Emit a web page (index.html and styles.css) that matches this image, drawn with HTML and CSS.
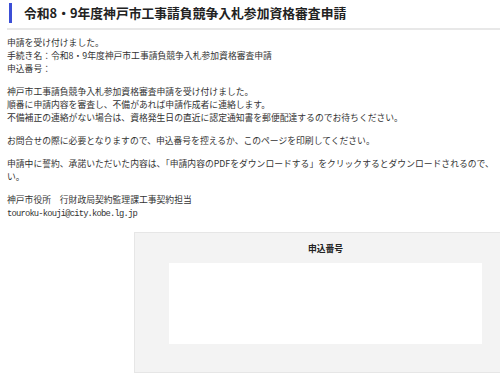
FILE: index.html
```html
<!DOCTYPE html>
<html>
<head>
    <title>申請完了</title>
    <link rel="stylesheet" href="styles.css">
</head>
<body>

    <!-- Page title -->
    <div class="title-bar">
        <h1 class="title">令和8・9年度神戸市工事請負競争入札参加資格審査申請</h1>
    </div>

    <div class="content">
        <p>申請を受け付けました。<br>
        手続き名：令和8・9年度神戸市工事請負競争入札参加資格審査申請<br>
        申込番号：</p>

        <p>神戸市工事請負競争入札参加資格審査申請を受け付けました。<br>
        順番に申請内容を審査し、不備があれば申請作成者に連絡します。<br>
        不備補正の連絡がない場合は、資格発生日の直近に認定通知書を郵便配達するのでお待ちください。</p>

        <p>お問合せの際に必要となりますので、申込番号を控えるか、このページを印刷してください。</p>

        <p>申請中に誓約、承諾いただいた内容は、「申請内容のPDFをダウンロードする」をクリックするとダウンロードされるので、い。</p>

        <p>神戸市役所　行財政局契約監理課工事契約担当<br>
        <span class="mail">touroku-kouji@city.kobe.lg.jp</span></p>

        <!-- Application number box -->
        <div class="number-box">
            <div class="number-label">申込番号</div>
            <div class="number-value"></div>
        </div>
    </div>

</body>
</html>
```

FILE: styles.css
```css
html {
    overflow: hidden;
}
body {
    margin: 0;
    font-family: "Noto Sans CJK JP", "Noto Sans", sans-serif;
    font-size: 8.8px;
    line-height: 13px;
    color: #333;
    background-color: #fff;
}
.title-bar {
    margin-left: 7px;
    padding: 3px 0 5px 2px;
    border-bottom: 2px solid #e8e8e8;
}
.title {
    margin: 0;
    border-left: 3px solid #3c4fd6;
    padding-left: 12px;
    height: 20px;
    font-size: 12.8px;
    line-height: 20px;
    font-weight: bold;
    color: #222;
}
.content {
    padding: 6px 0 0 7px;
}
.content p {
    margin: 0 0 10px 0;
}
.mail {
    font-family: "Liberation Mono", monospace;
    letter-spacing: -0.8px;
}
.number-box {
    margin: 11px 0 0 127px;
    width: 383px;
    box-sizing: border-box;
    background-color: #f3f3f3;
    border: 1px solid #e6e6e6;
    padding: 9px 34px 28px 34px;
}
.number-label {
    text-align: center;
    font-weight: bold;
    color: #222;
    margin-bottom: 8px;
}
.number-value {
    height: 81px;
    background-color: #fff;
}
```
